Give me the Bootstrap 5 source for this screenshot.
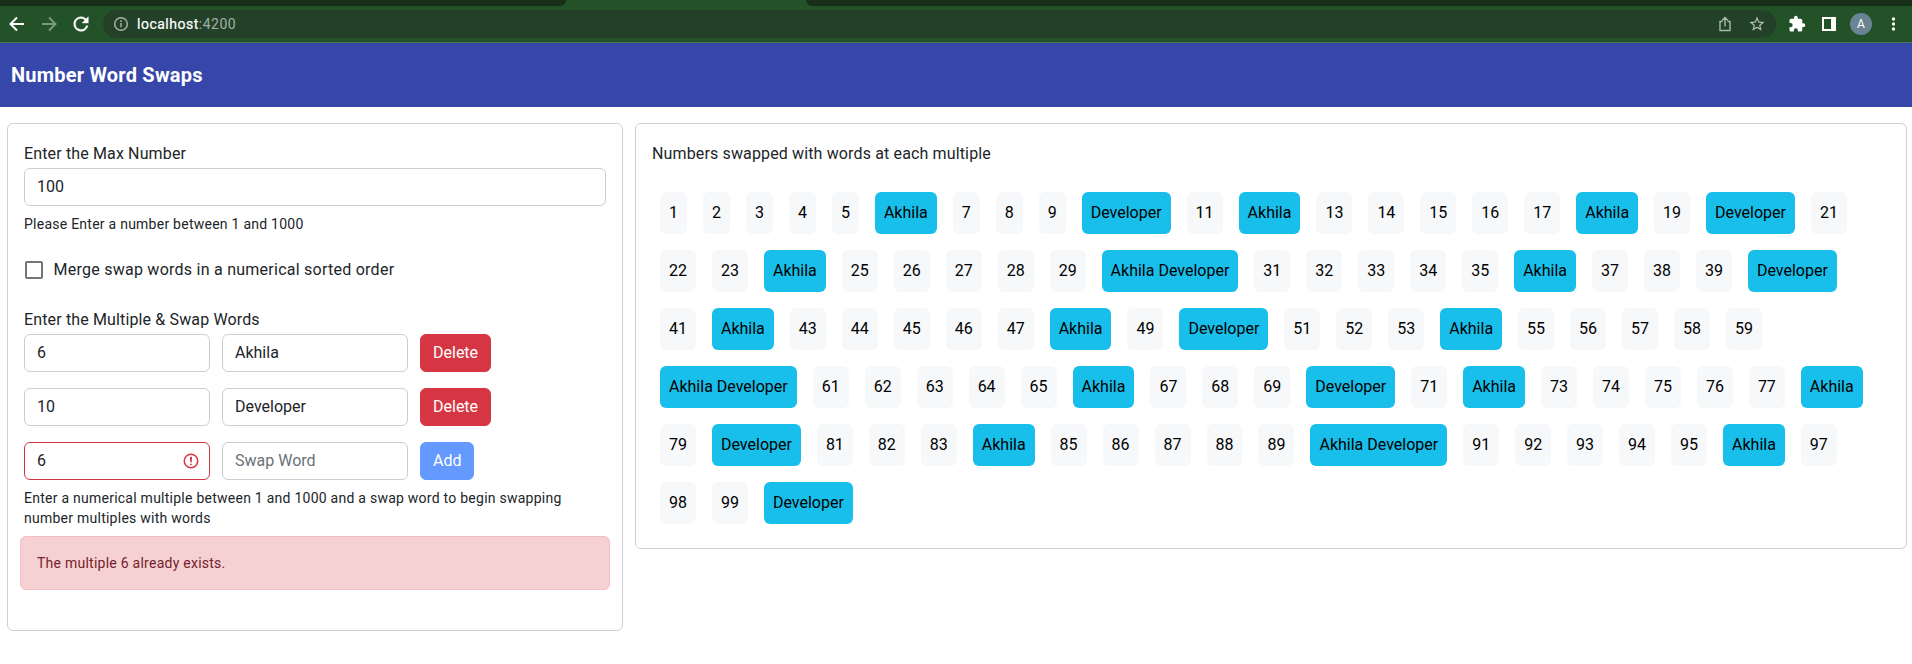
<!DOCTYPE html>
<html lang="en">
<head>
<meta charset="utf-8">
<title>Number Word Swaps</title>
<link href="https://cdn.jsdelivr.net/npm/bootstrap@5.3.0/dist/css/bootstrap.min.css" rel="stylesheet">
<style>
body{font-family:Roboto,"Liberation Sans",sans-serif;color:#212529;letter-spacing:.25px;overflow:hidden;background:#fff}
.tabstrip{height:6px;background:#245228}
.tabstrip div{background:#18301a}
.tab-l{width:566px;border-bottom-right-radius:7px}
.tab-gap{width:240px;background:#245228!important}
.tab-r{border-bottom-left-radius:7px}
.toolbar{height:37px;background:#245228;border-bottom:1px solid #4b7650;padding:0 16px 0 8px}
.urlbar{height:28px;margin-left:11px;margin-right:10px;border-radius:14px;background:#234028;padding:0 8px;font-size:14px;color:#a3b2a5;letter-spacing:.5px}
.urlbar b{font-weight:400;color:#fff;-webkit-text-stroke:.2px #fff}
.avatar-dot{width:22px;height:22px;border-radius:50%;background:#6b8494;color:#fff;font-size:12px;letter-spacing:0}
.app-head{height:64px;background:#3747a9;color:#fff;padding-left:11px;font-size:20px;font-weight:700;letter-spacing:.21px}
.panes{padding:16px 5px 0 7px;gap:12px}
.pane{border:1px solid #cfcfcf;border-radius:6px;padding:16px}
.pane-l{width:616px;height:508px;flex:none}
.pane-r{height:426px}
.form-control,.btn{letter-spacing:0}
.form-control,.btn{height:38px}
.form-control{border-color:#c9ced5;padding-top:5px;padding-bottom:7px}
.form-control::placeholder{color:#6a7178}
.form-control.is-invalid{border-color:#d33643}
.lbl{line-height:24px;padding-top:2px;height:28px;letter-spacing:.14px}
.hint{font-size:14px;line-height:20px}
.w-in{width:186px}
.btn-danger{background:#d63643;border-color:#d63643}
.btn-add{background:#6499ff;border-color:#6499ff;color:#fff}
.tick{width:18px;height:18px;border:2px solid #757575;border-radius:2px;margin-left:1px}
.merge{height:24px;margin-top:24px;gap:10.5px}
.note{margin:8px -4px 0;height:54px;background:#f5d1d3;border:1px solid #f0bdc1;color:#76222c;border-radius:6px;padding:0 16px;font-size:14px}
.chips{padding:0 8px;gap:16px;margin-top:24px}
.chip{height:42px;padding:0 8.985px 0 9px;border-radius:6px;line-height:42px;background:#f7f8fa;color:#000;letter-spacing:0;white-space:nowrap}
.chip.swap{background:#18bfeb}
</style>
</head>
<body>
<div class="tabstrip d-flex"><div class="tab-l"></div><div class="tab-gap"></div><div class="tab-r flex-grow-1"></div></div>
<div class="toolbar d-flex align-items-center">
  <svg width="18" height="18" viewBox="0 0 18 18" fill="none" stroke="#fff" stroke-width="2"><path d="M16 9H3M9 2.5 2.5 9 9 15.500"/></svg>
  <svg style="margin-left:14px" width="18" height="18" viewBox="0 0 18 18" fill="none" stroke="#7d9a80" stroke-width="2"><path d="M2 9h13M9 2.500 15.500 9 9 15.500"/></svg>
  <svg style="margin-left:12px" width="22" height="22" viewBox="0 0 24 24" fill="#fff"><path stroke="#fff" stroke-width=".4" d="M17.650 6.350A7.960 7.960 0 0 0 12 4a8 8 0 1 0 7.730 10h-2.080A6 6 0 1 1 12 6c1.660 0 3.140.690 4.220 1.780L13 11h7V4z"/></svg>
  <div class="urlbar d-flex align-items-center flex-grow-1">
    <svg style="margin-right:6px" width="20" height="20" viewBox="0 0 20 20" fill="none" stroke="#a3b2a5" stroke-width="1.500"><circle cx="10" cy="10" r="6.300"/><path d="M10 9v4.200M10 6.200v1.700"/></svg>
    <span><b>localhost</b>:4200</span>
    <svg class="ms-auto" width="16" height="18" viewBox="0 0 16 18" fill="none" stroke="#a9b8ab" stroke-width="1.400"><path d="M5.500 6.500H3v9h10v-9h-2.500M8 11.500V3M5 5.500l3-3 3 3"/></svg>
    <svg style="margin-left:15px;margin-right:2px" width="18" height="18" viewBox="0 0 24 24" fill="#b6c2b7"><path d="M22 9.240l-7.190-.620L12 2 9.190 8.630 2 9.240l5.460 4.730L5.820 21 12 17.270 18.180 21l-1.630-7.030L22 9.240zM12 15.400l-3.760 2.270 1-4.280-3.320-2.880 4.380-.380L12 6.100l1.710 4.040 4.380.380-3.320 2.880 1 4.280L12 15.400z"/></svg>
  </div>
  <svg style="margin-left:2px" width="18" height="18" viewBox="0 0 24 24" fill="#fff"><path d="M20.500 11H19V7a2 2 0 0 0-2-2h-4V3.500a2.500 2.500 0 0 0-5 0V5H4a2 2 0 0 0-2 2v3.800h1.500a2.700 2.700 0 0 1 0 5.400H2V20a2 2 0 0 0 2 2h3.800v-1.500a2.700 2.700 0 0 1 5.400 0V22H17a2 2 0 0 0 2-2v-4h1.500a2.500 2.500 0 0 0 0-5z"/></svg>
  <svg style="margin-left:16px" width="14" height="14" viewBox="0 0 14 14"><path fill="#fff" fill-rule="evenodd" d="M0 0h14v14H0zM2 2v10h7V2z"/></svg>
  <div class="avatar-dot d-flex align-items-center justify-content-center" style="margin-left:14px">A</div>
  <svg style="margin-left:19px" width="5" height="14" viewBox="0 0 5 14" fill="#fff"><circle cx="2.500" cy="2" r="1.650"/><circle cx="2.500" cy="7" r="1.650"/><circle cx="2.500" cy="12" r="1.650"/></svg>
</div>
<header class="app-head d-flex align-items-center">Number Word Swaps</header>
<main class="panes d-flex align-items-start">
  <section class="pane pane-l">
    <div class="lbl">Enter the Max Number</div>
    <input class="form-control" value="100">
    <div class="hint mt-2">Please Enter a number between 1 and 1000</div>
    <div class="merge d-flex align-items-center"><span class="tick"></span><span>Merge swap words in a numerical sorted order</span></div>
    <div class="lbl" style="margin-top:24px">Enter the Multiple &amp; Swap Words</div>
    <div class="d-flex flex-column gap-3">
      <div class="d-flex"><input class="form-control w-in me-2" value="6"><input class="form-control w-in ms-1 me-2" value="Akhila"><button class="btn btn-danger ms-1">Delete</button></div>
      <div class="d-flex"><input class="form-control w-in me-2" value="10"><input class="form-control w-in ms-1 me-2" value="Developer"><button class="btn btn-danger ms-1">Delete</button></div>
      <div class="d-flex"><input class="form-control is-invalid w-in me-2" value="6"><input class="form-control w-in ms-1 me-2" placeholder="Swap Word"><button class="btn btn-add ms-1">Add</button></div>
    </div>
    <div class="hint mt-2">Enter a numerical multiple between 1 and 1000 and a swap word to begin swapping number multiples with words</div>
    <div class="note d-flex align-items-center">The multiple 6 already exists.</div>
  </section>
  <section class="pane pane-r flex-grow-1">
    <div class="lbl">Numbers swapped with words at each multiple</div>
    <div class="chips d-flex flex-wrap" id="chips"></div>
  </section>
</main>
<script src="https://cdn.jsdelivr.net/npm/bootstrap@5.3.0/dist/js/bootstrap.bundle.min.js"></script>
<script>
const swaps=[[6,'Akhila'],[10,'Developer']],box=document.getElementById('chips');
for(let n=1;n<=100;n++){
  const w=swaps.filter(s=>n%s[0]===0).map(s=>s[1]).join(' ');
  const c=document.createElement('div');
  c.className='chip'+(w?' swap':'');
  c.textContent=w||n;
  box.append(c);
}
</script>
</body>
</html>
